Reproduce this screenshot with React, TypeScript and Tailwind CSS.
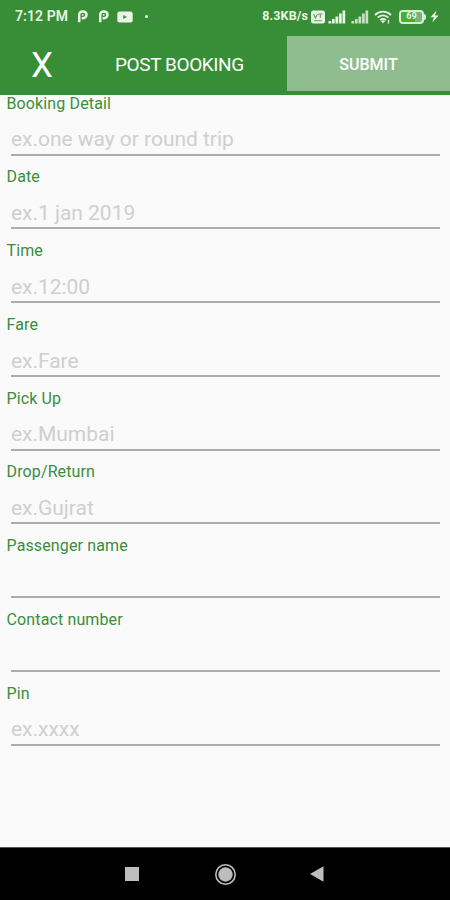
import React from "react";

const fields = [
  { label: "Booking Detail", placeholder: "ex.one way or round trip" },
  { label: "Date", placeholder: "ex.1 jan 2019" },
  { label: "Time", placeholder: "ex.12:00" },
  { label: "Fare", placeholder: "ex.Fare" },
  { label: "Pick Up", placeholder: "ex.Mumbai" },
  { label: "Drop/Return", placeholder: "ex.Gujrat" },
  { label: "Passenger name", placeholder: "" },
  { label: "Contact number", placeholder: "" },
  { label: "Pin", placeholder: "ex.xxxx" },
];

function PayIcon() {
  return (
    <svg width="11" height="13" viewBox="0 0 11 13" fill="none" stroke="currentColor" strokeWidth="2.500">
      <path d="M2.200 12.300V5C2.200 2.700 3.600 1.500 5.800 1.500S9.500 2.900 9.500 4.800 8.100 8.200 6.200 8.200H4.600" />
      <path d="M5.800 4v2" strokeWidth="1.200" />
    </svg>
  );
}

function VideoIcon() {
  return (
    <svg width="16" height="12" viewBox="0 0 16 12">
      <rect x="0.300" y="0.500" width="15.400" height="11" rx="2.500" fill="currentColor" />
      <path d="M6.300 3.900v4.200l3.700-2.100z" fill="#388e36" />
    </svg>
  );
}

function VolteIcon() {
  return (
    <svg width="14" height="14" viewBox="0 0 14 14">
      <rect x="0" y="0.500" width="14" height="13" rx="2.500" fill="currentColor" />
      <path d="M2.500 4l2 4 2-4M7 4h4.500M9.300 4v4M3 10.700h8" fill="none" stroke="#5da25b" strokeWidth="1.100" />
    </svg>
  );
}

function SignalIcon() {
  return (
    <svg width="18" height="14" viewBox="0 0 18 14" fill="currentColor">
      <rect x="0.500" y="11" width="2.700" height="2.500" />
      <rect x="4" y="9" width="2.700" height="4.500" />
      <rect x="7.500" y="6.500" width="2.700" height="7" />
      <rect x="11" y="3.500" width="2.700" height="10" />
      <rect x="14.500" y="0.500" width="2.700" height="13" />
    </svg>
  );
}

function WifiIcon() {
  return (
    <svg width="18" height="14" viewBox="0 0 18 14" fill="none" stroke="currentColor" strokeWidth="1.900">
      <path d="M1 5C5.500.500 12.500.500 17 5" />
      <path d="M3.600 7.600c3-3 7.800-3 10.800 0" />
      <path d="M6.100 10.100c1.600-1.600 4.200-1.600 5.800 0" />
      <path d="M9 13.300 6.900 11.200a3 3 0 0 1 4.200 0z" fill="currentColor" stroke="none" />
      <path d="M14.500 10v3.500" strokeWidth="1.300" />
    </svg>
  );
}

function Battery() {
  return (
    <div className="flex items-center">
      <div className="relative flex h-[14px] w-[25px] items-center justify-center overflow-hidden rounded-[4px] border-2 border-[#d9ecd6] bg-[#79b377]">
        <div className="absolute inset-y-0 left-0 w-[14px] bg-[#43b51c]" />
        <span className="relative text-[9px] leading-none font-bold">69</span>
      </div>
      <div className="h-[6px] w-[2px] rounded-r bg-[#d9ecd6]" />
      <svg className="ml-1" width="9" height="13" viewBox="0 0 9 13" fill="currentColor">
        <path d="M6.500 0.500 0.500 7.200h3.400L2.300 12.500 8.500 5.600H5z" />
      </svg>
    </div>
  );
}

function StatusBar() {
  return (
    <div className="flex h-9 items-center pt-px pr-[11px] pb-1 pl-[15px] text-[#eaf5e8]">
      <span className="w-[62px] text-[14px] font-semibold tracking-[0.1px] whitespace-nowrap">7:12 PM</span>
      <div className="flex items-center">
        <PayIcon />
        <div className="ml-[10px]">
          <PayIcon />
        </div>
        <div className="ml-2">
          <VideoIcon />
        </div>
        <div className="ml-[12px] size-[3px] rounded-full bg-current" />
      </div>
      <div className="ml-auto flex items-center">
        <span className="mr-[3px] text-[12.500px] font-bold tracking-[0.1px] whitespace-nowrap">8.3KB/s</span>
        <VolteIcon />
        <div className="ml-[3px]">
          <SignalIcon />
        </div>
        <div className="ml-[5px] opacity-80">
          <SignalIcon />
        </div>
        <div className="mr-[7px] ml-[5px]">
          <WifiIcon />
        </div>
        <Battery />
      </div>
    </div>
  );
}

function Header() {
  return (
    <header className="h-[95px] bg-[#388e36] text-white">
      <StatusBar />
      <div className="flex h-[55px]">
        <button className="w-[84px] pt-[4px] text-[35px] leading-none">X</button>
        <h1 className="flex-1 pl-[31px] text-[19px] leading-[57px] tracking-[-0.4px] whitespace-nowrap">POST BOOKING</h1>
        <button className="w-[163px] bg-[#8fbd8f] pt-[2px] text-[16px] font-medium">SUBMIT</button>
      </div>
    </header>
  );
}

export default function App() {
  return (
    <div className="flex h-[900px] w-[450px] flex-col overflow-hidden bg-[#fafafa] font-['Roboto',sans-serif]">
      <Header />
      <form className="flex-1">
        {fields.map((field) => (
          <label key={field.label} className="flex h-[73.75px] flex-col pt-[0.5px]">
            <span className="pl-[6.500px] text-[16px] leading-[16px] tracking-[0.13px] text-[#388e3c]">{field.label}</span>
            <input
              type="text"
              placeholder={field.placeholder}
              className="mt-[0.5px] mr-[10px] ml-[11px] h-[43.500px] border-b-2 border-[#acacac] bg-transparent pt-[13px] text-[21px] leading-[28px] tracking-[-0.03px] outline-none placeholder:text-[#cfcfcf]"
            />
          </label>
        ))}
      </form>
      <nav className="flex h-[53px] items-center border-t border-[#555] bg-black text-[#bdbdbd]">
        <div className="ml-[125px] size-[14px] bg-current" />
        <svg className="ml-[75px]" width="23" height="23" viewBox="0 0 23 23">
          <circle cx="11.500" cy="11.500" r="9.700" fill="none" stroke="currentColor" strokeWidth="1.600" />
          <circle cx="11.500" cy="11.500" r="7.200" fill="currentColor" />
        </svg>
        <svg className="ml-[73px]" width="14" height="16" viewBox="0 0 14 16" fill="currentColor">
          <path d="M0 8 13.500 0.300v15.400z" />
        </svg>
      </nav>
    </div>
  );
}
